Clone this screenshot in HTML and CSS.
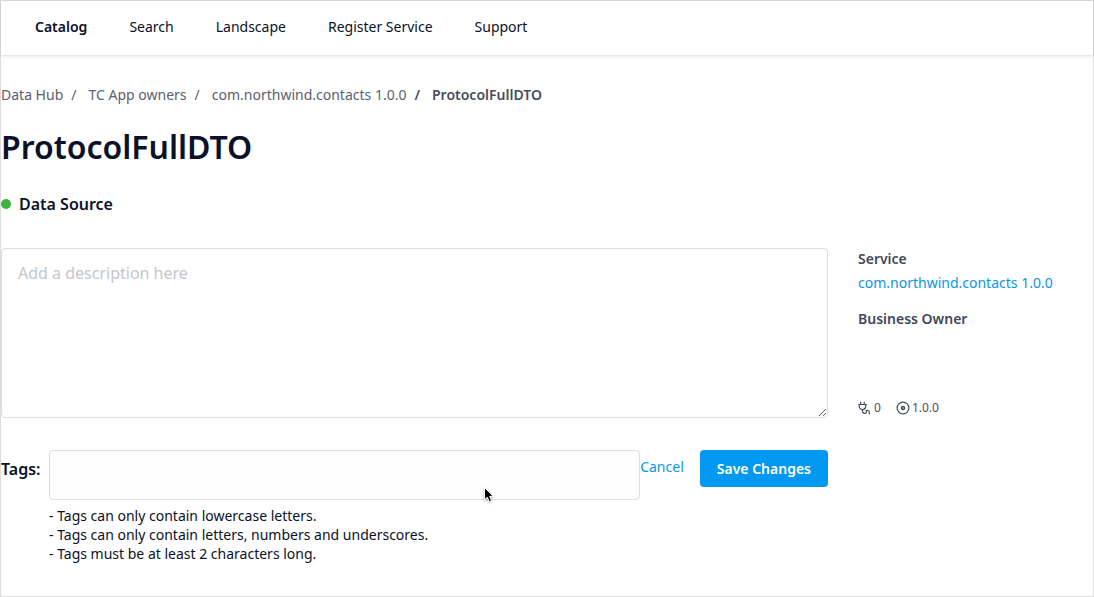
FILE: index.html
```html
<!DOCTYPE html>
<html lang="en">
<head>
<meta charset="utf-8">
<meta name="viewport" content="width=device-width, initial-scale=1">
<title>ProtocolFullDTO</title>
<link rel="stylesheet" href="styles.css">
</head>
<body>
<div class="app">
  <header class="topbar">
    <nav class="nav" aria-label="Main">
      <a class="nav-link active" href="#">Catalog</a>
      <a class="nav-link" href="#">Search</a>
      <a class="nav-link" href="#">Landscape</a>
      <a class="nav-link" href="#">Register Service</a>
      <a class="nav-link" href="#">Support</a>
    </nav>
  </header>
  <main>
    <nav class="breadcrumbs" aria-label="Breadcrumb">
      <a href="#">Data Hub</a><span>/</span>
      <a href="#">TC App owners</a><span>/</span>
      <a href="#">com.northwind.contacts 1.0.0</a><span class="current">/</span>
      <a class="current" href="#" aria-current="page">ProtocolFullDTO</a>
    </nav>
    <h1 class="title">ProtocolFullDTO</h1>
    <p class="kind"><i class="dot"></i>Data Source</p>
    <div class="columns">
      <form class="editor">
        <textarea class="description" aria-label="Description" placeholder="Add a description here"></textarea>
        <div class="tag-row">
          <label class="tag-label" for="tags">Tags:</label>
          <div class="tag-field">
            <input class="tag-input" id="tags" type="text" aria-describedby="tag-rules">
            <div class="tag-rules" id="tag-rules">
              <div>- Tags can only contain lowercase letters.</div>
              <div>- Tags can only contain letters, numbers and underscores.</div>
              <div>- Tags must be at least 2 characters long.</div>
            </div>
          </div>
          <a class="cancel" href="#">Cancel</a>
          <button class="save" type="button">Save Changes</button>
        </div>
      </form>
      <aside class="details">
        <h2 class="detail-title">Service</h2>
        <a class="service-link" href="#">com.northwind.contacts 1.0.0</a>
        <h2 class="detail-title">Business Owner</h2>
        <div class="stats">
          <span class="stat">
            <svg class="icon" viewBox="0 0 14 14" aria-hidden="true"><path d="M2.700.8v2.600M6.200.8v2.600M.2 3.500h8.600M1.200 3.500v1.800a3.200 3.300 0 0 0 6.500 0V3.500M4.400 8.600v1.200a2.600 2.600 0 0 0 2.600 2.600 1.500 1.500 0 0 0 1.100-2.500 1.900 1.900 0 0 1 3.200 1.300V13.500"/></svg>0
          </span>
          <span class="stat">
            <svg class="icon" viewBox="0 0 14 14" aria-hidden="true"><circle cx="7" cy="7" r="5.900"/><circle class="hub" cx="7" cy="7" r="1.700"/></svg>1.0.0
          </span>
        </div>
      </aside>
    </div>
  </main>
  <svg class="pointer" viewBox="0 0 12 18" aria-hidden="true"><path d="M1.500 1.500v12.300l2.800-2.500 2 4.300 2.300-1-1.900-4.200h3.600z"/></svg>
</div>
</body>
</html>
```
FILE: styles.css
```css
* {
  box-sizing: border-box;
}

body {
  margin: 0;
  background: #fff;
  color: #0a1128;
  font: 14px/20px "Noto Sans", sans-serif;
}

a {
  color: inherit;
  text-decoration: none;
}

.app {
  position: relative;
  min-height: 100vh;
  border: 1px solid #ddd;
}

.topbar {
  padding: 16px 34px 18px;
  box-shadow: 0 1px 3px rgba(0, 0, 0, 0.14);
}

.nav {
  display: flex;
  gap: 42px;
}

.active {
  font-weight: 600;
}

.breadcrumbs {
  display: flex;
  padding-top: 30px;
  color: #5b6070;
}

.breadcrumbs span {
  margin: 0 12px 0 8px;
}

.breadcrumbs .current {
  color: #474d5e;
  font-weight: 600;
}

.title {
  margin: 20px 0 0;
  font-size: 32px;
  font-weight: 600;
  line-height: 44px;
}

.kind {
  display: flex;
  align-items: center;
  gap: 8px;
  margin: 23px 0 32px;
  font-size: 16px;
  font-weight: 600;
  line-height: 24px;
}

.dot {
  width: 10px;
  height: 10px;
  border-radius: 50%;
  background: #3cb43c;
}

.columns {
  display: grid;
  grid-template-columns: 1fr 235px;
  gap: 30px;
}

.description {
  display: block;
  width: 100%;
  height: 170px;
  padding: 12px 16px;
  border: 1px solid #ddd;
  border-radius: 4px;
  background: #fff;
  color: inherit;
  font: 16px/24px "Noto Sans", sans-serif;
}

.description::placeholder {
  color: #c4c6cc;
}

.tag-row {
  display: flex;
  align-items: flex-start;
  margin-top: 32px;
}

.tag-label {
  width: 48px;
  padding-top: 9px;
  font-size: 16px;
  font-weight: 600;
}

.tag-field {
  flex: 1;
}

.tag-input {
  display: block;
  width: 100%;
  height: 50px;
  padding: 0 12px;
  border: 1px solid #ddd;
  border-radius: 4px;
  background: #fefefe;
  font: inherit;
}

.tag-rules {
  margin-top: 6px;
  line-height: 19px;
}

.cancel {
  margin-right: 16px;
  padding-top: 7px;
  color: #0a96eb;
}

.save {
  padding: 8px 17px;
  border: 0;
  border-radius: 4px;
  background: #0098f0;
  color: #fff;
  font: 600 14px/21px "Noto Sans", sans-serif;
}

.detail-title {
  margin: 0;
  color: #424859;
  font-size: 14px;
  font-weight: 600;
  line-height: 22px;
}

.service-link {
  display: block;
  margin: 3px 0 15px;
  color: #0a96eb;
}

.stats {
  display: flex;
  gap: 15px;
  margin-top: 68px;
  color: #474d5e;
  font-size: 12px;
}

.stat {
  display: flex;
  align-items: center;
  gap: 2px;
}

.icon {
  width: 14px;
  height: 14px;
  fill: none;
  stroke: #474d5e;
  stroke-width: 1.2;
}

.hub {
  fill: #8f93a0;
}

.pointer {
  position: absolute;
  top: 485px;
  left: 482px;
  width: 12px;
  height: 18px;
  fill: #000;
  stroke: #fff;
  stroke-width: 1;
  filter: drop-shadow(0 1px 1px rgba(0, 0, 0, 0.3));
}
```
